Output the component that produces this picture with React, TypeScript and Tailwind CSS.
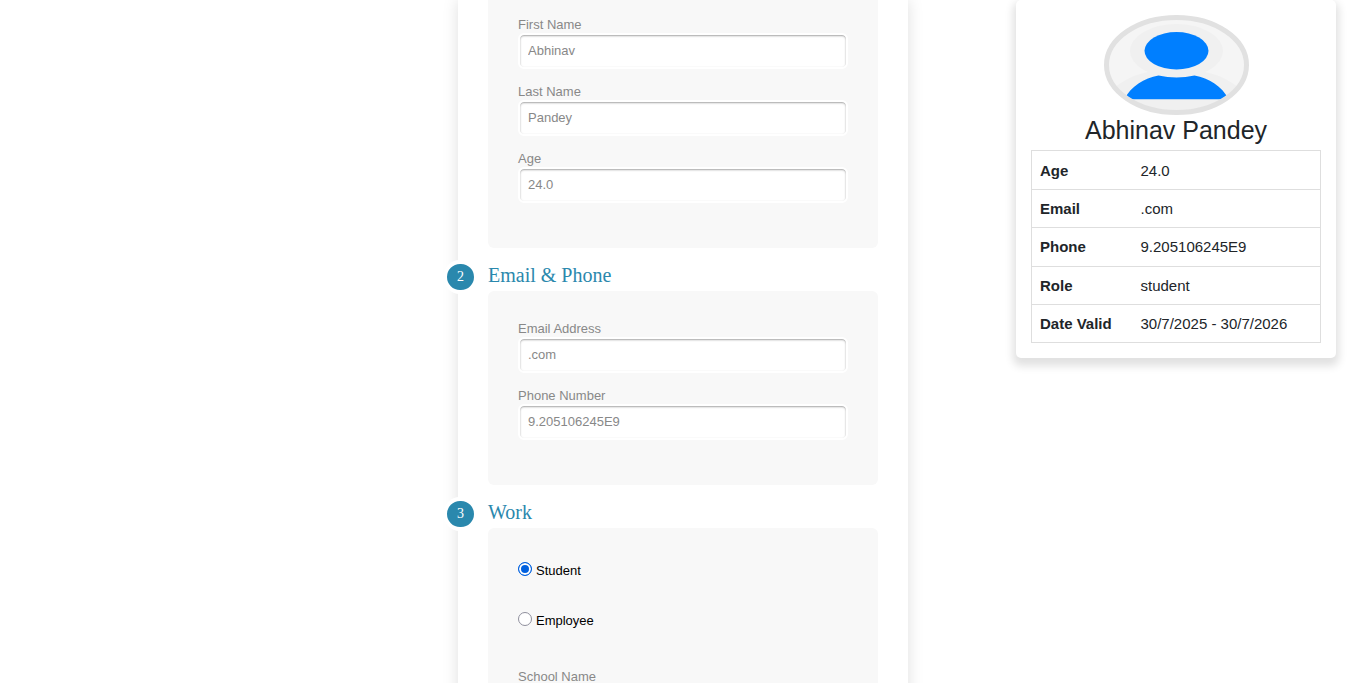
import { useState } from "react";
import type { ReactNode } from "react";

function Field({ id, label, value }: { id: string; label: string; value: string }) {
  return (
    <div className="mb-[15px]">
      <label htmlFor={id} className="block text-[13px] leading-4 text-[#888]">
        {label}
      </label>
      <input
        id={id}
        type="text"
        defaultValue={value}
        className="block h-9 w-full rounded-md border-2 border-white bg-white px-2 pb-0.5 text-[13px] leading-4 text-[#888] shadow-[inset_0_1px_2px_rgba(0,0,0,0.36)] outline-none"
      />
    </div>
  );
}

function Section({ step, title, children }: { step: number; title: string; children: ReactNode }) {
  return (
    <section className="relative mb-[15px]">
      <span className="absolute -left-[45px] -top-[3px] flex h-[34px] w-[35px] items-center justify-center rounded-full border-4 border-white bg-[#2a88ad] font-['Liberation_Serif',serif] text-sm text-white">
        {step}
      </span>
      <h2 className="mb-[3px] font-['Liberation_Serif',serif] text-[20px] leading-[25px] text-[#2a88ad]">
        {title}
      </h2>
      <div className="rounded-md bg-[#f8f8f8] p-[30px]">{children}</div>
    </section>
  );
}

function RoleOption({ value, label, checked, onSelect }: { value: string; label: string; checked: boolean; onSelect: (v: string) => void }) {
  return (
    <label className="flex items-center gap-1 py-1 text-[13px] leading-4 text-black">
      <input
        type="radio"
        name="role"
        value={value}
        checked={checked}
        onChange={() => onSelect(value)}
        className="mb-[3px] size-[14px] appearance-none rounded-full border border-[#8f8f9d] bg-white checked:border-[#0060df] checked:bg-[#0060df] checked:shadow-[inset_0_0_0_2px_#fff]"
      />
      {label}
    </label>
  );
}

function Avatar() {
  return (
    <svg viewBox="0 0 145 100" className="mx-auto block h-[100px] w-[145px]" role="img" aria-label="Profile">
      <defs>
        <clipPath id="face">
          <ellipse cx="72.5" cy="50" rx="68" ry="45.5" />
        </clipPath>
      </defs>
      <ellipse cx="72.5" cy="50" rx="70" ry="47.5" fill="#f5f5f5" />
      <g clipPath="url(#face)">
        <ellipse cx="72.5" cy="36" rx="46.5" ry="27" fill="#f0f0f0" />
        <path d="M3 80C14 67 32 58 50 56H95C113 58 131 67 142 80L125 100H20Z" fill="#f0f0f0" />
        <ellipse cx="72.5" cy="35.8" rx="32" ry="18.7" fill="#007fff" />
        <path d="M20.5 84.2C27 71 40 63.3 54.5 60.5Q72.500 64.5 90.5 60.5C105 63.3 118 71 124.5 84.2Z" fill="#007fff" />
      </g>
      <ellipse cx="72.5" cy="50" rx="70" ry="47.5" fill="none" stroke="#e1e1e1" strokeWidth="5" />
    </svg>
  );
}

const details = [
  ["Age", "24.0"],
  ["Email", ".com"],
  ["Phone", "9.205106245E9"],
  ["Role", "student"],
  ["Date Valid", "30/7/2025 - 30/7/2026"],
];

export default function App() {
  const [role, setRole] = useState("student");
  return (
    <div className="grid h-screen grid-cols-[1fr_450px_1fr] overflow-hidden bg-white font-['Liberation_Sans',Arial,sans-serif]">
      <form className="col-start-2 h-max bg-white px-[30px] pb-[30px] shadow-[0_0_15px_rgba(0,0,0,0.13)]">
        <div className="mb-[15px] rounded-b-md bg-[#f8f8f8] px-[30px] pb-[30px] pt-[17px]">
          <Field id="first" label="First Name" value="Abhinav" />
          <Field id="last" label="Last Name" value="Pandey" />
          <Field id="age" label="Age" value="24.0" />
        </div>
        <Section step={2} title="Email & Phone">
          <Field id="email" label="Email Address" value=".com" />
          <Field id="phone" label="Phone Number" value="9.205106245E9" />
        </Section>
        <Section step={3} title="Work">
          <div className="mb-9 flex flex-col gap-[25px]">
            <RoleOption value="student" label="Student" checked={role === "student"} onSelect={setRole} />
            <RoleOption value="employee" label="Employee" checked={role === "employee"} onSelect={setRole} />
          </div>
          <Field id="school" label="School Name" value="" />
        </Section>
      </form>
      <aside className="mr-[30px] h-max w-80 justify-self-end rounded-[5px] bg-white p-[15px] text-[#212529] shadow-[0_5px_8px_3px_rgba(0,0,0,0.12)]">
        <Avatar />
        <h1 className="mb-[5px] text-center text-[25px] leading-[30px]">Abhinav Pandey</h1>
        <table className="h-[193px] w-full border-collapse text-left text-[15px] leading-[22px]">
          <tbody>
            {details.map(([name, value]) => (
              <tr key={name} className="h-[38px] border border-[#dedede] first:h-[39px]">
                <th scope="row" className="w-[101px] px-2 pt-px font-bold">{name}</th>
                <td className="px-2 pt-px">{value}</td>
              </tr>
            ))}
          </tbody>
        </table>
      </aside>
    </div>
  );
}
